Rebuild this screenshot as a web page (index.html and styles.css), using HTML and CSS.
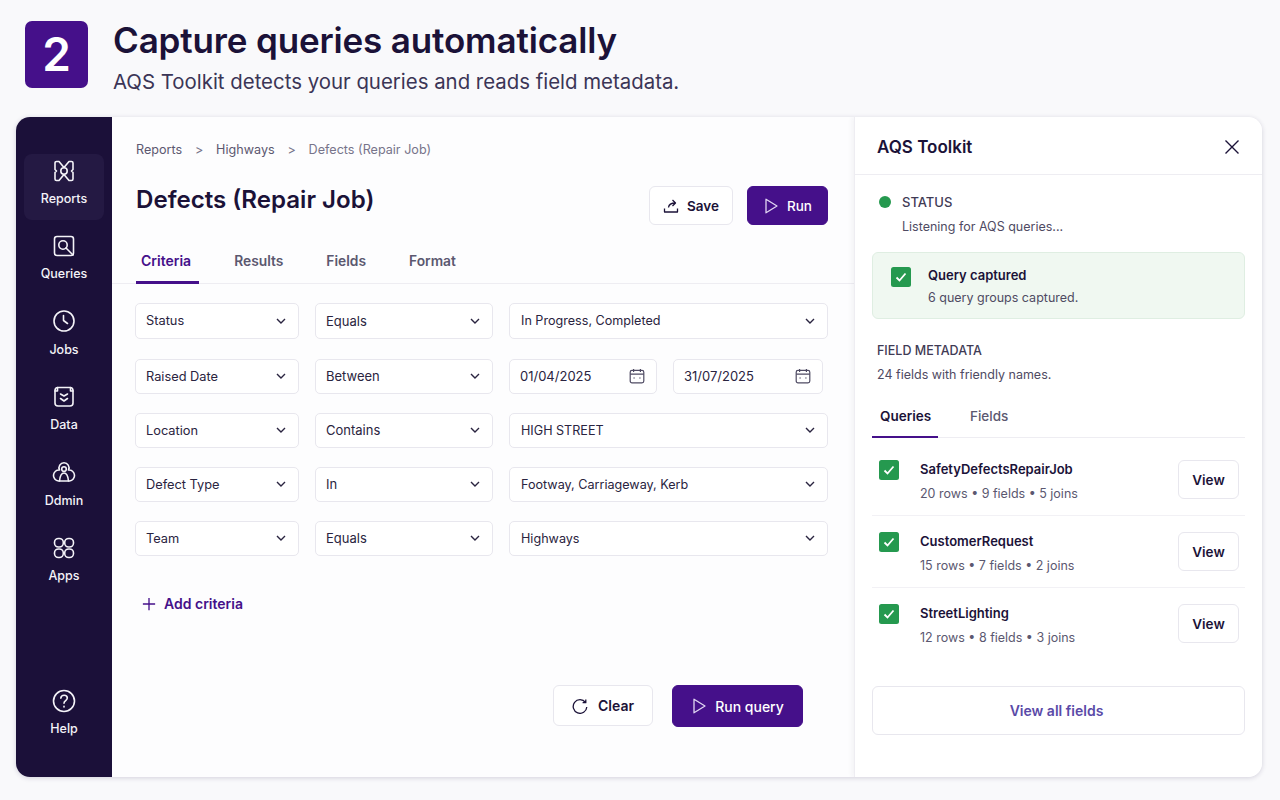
FILE: index.html
```html
<!DOCTYPE html>
<html lang="en">
<head>
    <meta charset="UTF-8">
    <title>Capture queries automatically</title>
    <link rel="stylesheet" href="styles.css">
</head>
<body>
    <svg class="defs" width="0" height="0">
        <symbol id="chev" viewBox="0 0 12 12"><path d="M2 4l4 4 4-4"/></symbol>
        <symbol id="cal" viewBox="0 0 16 16"><rect x="1.2" y="2.4" width="13.6" height="12.4" rx="1.8"/><path d="M1.2 6.2h13.6M4.6 1v3M11.4 1v3M4.4 10h1.4M10.2 10h1.4"/></symbol>
        <symbol id="play" viewBox="0 0 16 16"><path d="M3 1.2L14 8 3 14.8z"/></symbol>
        <symbol id="tick" viewBox="0 0 20 20"><rect width="20" height="20" rx="2.5" class="tick-box"/><path d="M5.5 10.5l3 3 6-7" class="tick-mark"/></symbol>
    </svg>

    <header class="top">
        <div class="badge">2</div>
        <div>
            <h1>Capture queries automatically</h1>
            <p>AQS Toolkit detects your queries and reads field metadata.</p>
        </div>
    </header>

    <div class="app">
        <nav class="side">
            <a class="nav on">
                <svg viewBox="0 0 24 24"><path d="M4.5 2.5H7L12 8.500l5-6h2.500A1.500 1.500 0 0 1 21 4v6.500L19.500 12l1.500 1.500V20a1.500 1.500 0 0 1-1.500 1.500H17l-5-6-5 6H4.500A1.500 1.500 0 0 1 3 20v-6.500L4.500 12 3 10.500V4a1.500 1.500 0 0 1 1.500-1.500z"/><circle cx="12" cy="12" r="3.200"/></svg>
                Reports
            </a>
            <a class="nav">
                <svg viewBox="0 0 24 24"><rect x="2.5" y="2.500" width="19" height="19" rx="2.500"/><circle cx="11" cy="11" r="4.200"/><path d="M14 14l7 7"/></svg>
                Queries
            </a>
            <a class="nav">
                <svg viewBox="0 0 24 24"><circle cx="12" cy="11" r="10"/><path d="M11.500 5.500v5l4 3"/></svg>
                Jobs
            </a>
            <a class="nav">
                <svg viewBox="0 0 24 24"><rect x="3" y="2.500" width="18" height="18.500" rx="3"/><path d="M3 6h2.500V2.500M21 6h-2.500V2.500M8.500 9l3.500 2 3.500-2M8.500 13.500l3.500 2.500 3.500-2.500"/></svg>
                Data
            </a>
            <a class="nav">
                <svg viewBox="0 0 24 24"><path d="M7.500 9A5 5 0 1 1 16.500 9 5.500 5.500 0 0 1 17.500 20h-11A5.500 5.500 0 0 1 7.500 9z"/><circle cx="12" cy="8" r="2.300"/><path d="M7.500 20c.5-5 2-8 4.500-8s4 3 4.500 8"/></svg>
                Ddmin
            </a>
            <a class="nav">
                <svg viewBox="0 0 24 24"><rect x="2.5" y="2.500" width="8.800" height="8.500" rx="4"/><rect x="12.700" y="2.500" width="8.800" height="8.500" rx="4"/><rect x="2.500" y="13" width="8.800" height="8.500" rx="4"/><rect x="12.700" y="13" width="8.800" height="8.500" rx="4"/></svg>
                Apps
            </a>
            <a class="nav help">
                <svg viewBox="0 0 24 24"><circle cx="12" cy="12" r="10.500"/><path d="M8.800 9.200c.2-2 1.600-3 3.300-3 1.800 0 3.200 1.200 3.200 2.900 0 2.500-3.300 2.700-3.300 5.200"/><path d="M12 17.300v.6"/></svg>
                Help
            </a>
        </nav>

        <main class="main">
            <div class="crumbs">
                <span>Reports</span><i>&gt;</i><span>Highways</span><i>&gt;</i><span class="last">Defects (Repair Job)</span>
            </div>
            <div class="title-row">
                <h2>Defects (Repair Job)</h2>
                <div class="actions">
                    <button class="btn">
                        <svg class="ic" viewBox="0 0 16 16"><path d="M1.500 10.500V14h13v-3.500M5.500 9.500c.3-2.800 2.500-4.500 7-4.500M9.500 2l3 3-3 3"/></svg>
                        Save
                    </button>
                    <button class="btn primary">
                        <svg class="ic play"><use href="#play"/></svg>
                        Run
                    </button>
                </div>
            </div>
            <div class="tabs">
                <a class="tab on">Criteria</a>
                <a class="tab">Results</a>
                <a class="tab">Fields</a>
                <a class="tab">Format</a>
            </div>

            <div class="rows">
                <div class="row">
                    <div class="field f1">Status<svg class="chev"><use href="#chev"/></svg></div>
                    <div class="field f2">Equals<svg class="chev"><use href="#chev"/></svg></div>
                    <div class="field f3">In Progress, Completed<svg class="chev"><use href="#chev"/></svg></div>
                </div>
                <div class="row r2">
                    <div class="field f1">Raised Date<svg class="chev"><use href="#chev"/></svg></div>
                    <div class="field f2">Between<svg class="chev"><use href="#chev"/></svg></div>
                    <div class="field date">01/04/2025<svg class="cal"><use href="#cal"/></svg></div>
                    <div class="field date d2">31/07/2025<svg class="cal"><use href="#cal"/></svg></div>
                </div>
                <div class="row">
                    <div class="field f1">Location<svg class="chev"><use href="#chev"/></svg></div>
                    <div class="field f2">Contains<svg class="chev"><use href="#chev"/></svg></div>
                    <div class="field f3">HIGH STREET<svg class="chev"><use href="#chev"/></svg></div>
                </div>
                <div class="row">
                    <div class="field f1">Defect Type<svg class="chev"><use href="#chev"/></svg></div>
                    <div class="field f2">In<svg class="chev"><use href="#chev"/></svg></div>
                    <div class="field f3">Footway, Carriageway, Kerb<svg class="chev"><use href="#chev"/></svg></div>
                </div>
                <div class="row">
                    <div class="field f1">Team<svg class="chev"><use href="#chev"/></svg></div>
                    <div class="field f2">Equals<svg class="chev"><use href="#chev"/></svg></div>
                    <div class="field f3">Highways<svg class="chev"><use href="#chev"/></svg></div>
                </div>
            </div>

            <a class="add">
                <svg viewBox="0 0 16 16"><path d="M8 1v14M1 8h14"/></svg>
                Add criteria
            </a>

            <div class="foot">
                <button class="btn big">
                    <svg class="ic" viewBox="0 0 16 16"><path d="M13.500 4.500A6.800 6.800 0 1 0 14.800 9M13.800 1.500v3.200h-3.200"/></svg>
                    Clear
                </button>
                <button class="btn big primary">
                    <svg class="ic play"><use href="#play"/></svg>
                    Run query
                </button>
            </div>
        </main>

        <aside class="panel">
            <div class="panel-head">
                <h3>AQS Toolkit</h3>
                <svg class="close" viewBox="0 0 16 16"><path d="M1.500 1.500l13 13M14.500 1.500l-13 13"/></svg>
            </div>
            <div class="panel-body">
                <div class="status">
                    <div class="status-top"><b class="dot"></b>STATUS</div>
                    <p>Listening for AQS queries...</p>
                </div>
                <div class="captured">
                    <svg class="tick"><use href="#tick"/></svg>
                    <div>
                        <strong>Query captured</strong>
                        <p>6 query groups captured.</p>
                    </div>
                </div>
                <div class="meta">
                    <h4>FIELD METADATA</h4>
                    <p>24 fields with friendly names.</p>
                </div>
                <div class="subtabs">
                    <a class="subtab on">Queries</a>
                    <a class="subtab">Fields</a>
                </div>
                <div class="query first-query">
                    <svg class="tick"><use href="#tick"/></svg>
                    <div class="query-info">
                        <strong>SafetyDefectsRepairJob</strong>
                        <p>20 rows • 9 fields • 5 joins</p>
                    </div>
                    <button class="view">View</button>
                </div>
                <div class="query">
                    <svg class="tick"><use href="#tick"/></svg>
                    <div class="query-info">
                        <strong>CustomerRequest</strong>
                        <p>15 rows • 7 fields • 2 joins</p>
                    </div>
                    <button class="view">View</button>
                </div>
                <div class="query last-query">
                    <svg class="tick"><use href="#tick"/></svg>
                    <div class="query-info">
                        <strong>StreetLighting</strong>
                        <p>12 rows • 8 fields • 3 joins</p>
                    </div>
                    <button class="view">View</button>
                </div>
                <button class="view-all">View all fields</button>
            </div>
        </aside>
    </div>
</body>
</html>
```

FILE: styles.css
```css
*{
    margin: 0;
    padding: 0;
    box-sizing: border-box;
}
body{
    width: 1280px;
    height: 800px;
    overflow: hidden;
    background: #f9f9fb;
    color: #1b1238;
    font-family: Inter, "Liberation Sans", sans-serif;
}
.defs{
    position: absolute;
}
svg{
    fill: none;
    stroke: currentColor;
}
button{
    font-family: inherit;
    cursor: pointer;
}

/* page header */
.top{
    display: flex;
    height: 117px;
    padding: 21px 0 0 25px;
    gap: 25px;
}
.badge{
    width: 63px;
    height: 67px;
    border-radius: 7px;
    background: #45108a;
    color: #fff;
    font-size: 46px;
    font-weight: 600;
    line-height: 67px;
    text-align: center;
}
.top h1{
    font-size: 35px;
    font-weight: 600;
    line-height: 38px;
    letter-spacing: -0.15px;
}
.top p{
    margin-top: 10px;
    font-size: 20.4px;
    line-height: 26px;
    color: #3b3556;
}

/* app frame */
.app{
    display: flex;
    width: 1246px;
    height: 660px;
    margin-left: 16px;
    border-radius: 14px;
    background: #fdfdfe;
    box-shadow: 0 1px 5px rgba(40, 30, 80, 0.18);
    overflow: hidden;
}
.side{
    display: flex;
    flex-direction: column;
    flex: none;
    width: 96px;
    padding: 37px 8px 27px;
    gap: 9.4px;
    background: #1b1039;
    color: #f4f3f8;
}
.nav{
    display: flex;
    flex-direction: column;
    align-items: center;
    height: 66px;
    padding-top: 5px;
    border-radius: 8px;
    font-size: 12.5px;
    font-weight: 500;
    line-height: 16px;
}
.nav svg{
    width: 24px;
    height: 24px;
    margin-bottom: 8px;
    stroke-width: 1.6;
    stroke-linecap: round;
    stroke-linejoin: round;
}
.nav.on{
    background: #241943;
}
.help{
    margin-top: auto;
}

/* main column */
.main{
    display: flex;
    flex-direction: column;
    flex: none;
    width: 742px;
    padding: 24px 0 0;
}
.crumbs{
    display: flex;
    align-items: center;
    height: 17px;
    padding-left: 24px;
    font-size: 12.6px;
    color: #5c5870;
}
.crumbs i{
    width: 34px;
    font-style: normal;
    text-align: center;
    color: #77748a;
}
.crumbs .last{
    color: #77748a;
}
.title-row{
    display: flex;
    justify-content: space-between;
    padding: 23px 26px 0 24px;
    height: 86px;
}
.title-row h2{
    margin-top: 2px;
    font-size: 24.1px;
    font-weight: 600;
    line-height: 34px;
}
.actions{
    display: flex;
    gap: 14px;
    margin-top: 5px;
    height: 39px;
}
.btn{
    display: flex;
    align-items: center;
    justify-content: center;
    gap: 8px;
    width: 84px;
    border: 1px solid #e8e7ee;
    border-radius: 6px;
    background: #fff;
    color: #1b1238;
    font-size: 13.5px;
    font-weight: 600;
}
.btn.primary{
    width: 81px;
    border-color: #45108a;
    background: #45108a;
    color: #fff;
    font-weight: 500;
}
.ic{
    width: 16px;
    height: 16px;
    stroke-width: 1.3;
    stroke-linejoin: round;
}
.play{
    color: #e0d6f2;
}
.tabs{
    display: flex;
    height: 40px;
    padding-left: 24px;
    border-bottom: 1px solid #eeedf2;
}
.tab{
    padding: 0 6px;
    margin-right: 31px;
    font-size: 13.8px;
    font-weight: 600;
    line-height: 34px;
    color: #5b5870;
}
.tab.on{
    height: 40px;
    padding: 0 8px 0 5px;
    margin-right: 29px;
    border-bottom: 3px solid #45108a;
    color: #45108a;
    font-size: 14px;
}

/* criteria rows */
.rows{
    display: flex;
    flex-direction: column;
    gap: 18.5px;
    padding: 19px 0 0 23px;
}
.row{
    display: flex;
    gap: 16px;
}
.r2{
    margin-top: 1.5px;
}
.field{
    display: flex;
    align-items: center;
    justify-content: space-between;
    height: 35.5px;
    padding: 0 11px 0 10px;
    border: 1px solid #e8e7ee;
    border-radius: 5px;
    background: #fff;
    font-size: 13px;
    color: #2a2440;
}
.f1{
    width: 164px;
    font-size: 12.8px;
}
.f2{
    width: 178px;
}
.f3{
    width: 319px;
    padding-left: 11px;
    font-size: 12.6px;
}
.date{
    width: 148px;
}
.d2{
    width: 150px;
}
.chev{
    width: 12px;
    height: 12px;
    stroke-width: 1.4;
}
.cal{
    width: 16px;
    height: 16px;
    stroke-width: 1.2;
    color: #4f4b63;
}
.add{
    display: flex;
    align-items: center;
    gap: 8px;
    margin: 39px 0 0 30px;
    font-size: 14px;
    font-weight: 600;
    color: #45108a;
}
.add svg{
    width: 14px;
    height: 14px;
    stroke-width: 1.5;
}
.foot{
    display: flex;
    gap: 19px;
    margin: 73px 0 0 441px;
}
.btn.big{
    gap: 10px;
    width: 100px;
    height: 41px;
    font-size: 14px;
}
.btn.big.primary{
    gap: 8px;
    width: 131px;
    height: 42px;
}

/* toolkit panel */
.panel{
    flex: none;
    width: 408px;
    border-left: 1px solid #eeedf2;
    background: #fff;
    box-shadow: -2px 0 5px rgba(40, 30, 80, 0.05);
}
.panel-head{
    display: flex;
    align-items: center;
    justify-content: space-between;
    height: 58px;
    padding: 2px 22px 0;
    border-bottom: 1px solid #eeedf2;
}
.panel-head h3{
    font-size: 17px;
    font-weight: 600;
}
.close{
    width: 16px;
    height: 16px;
    stroke-width: 1.4;
}
.panel-body{
    padding: 0 17px;
}
.status{
    padding: 18px 0 0 7px;
}
.status-top{
    display: flex;
    align-items: center;
    gap: 11px;
    font-size: 13px;
    font-weight: 500;
    line-height: 18px;
    color: #3f3b55;
}
.dot{
    width: 12px;
    height: 12px;
    border-radius: 50%;
    background: #25994f;
}
.status p{
    margin: 7px 0 0 23px;
    font-size: 12.5px;
    line-height: 18px;
    color: #4f4b63;
}
.captured{
    display: flex;
    gap: 17px;
    height: 67px;
    margin-top: 16px;
    padding: 14px 18px;
    border: 1px solid #dfeee2;
    border-radius: 6px;
    background: #f0f8f1;
}
.captured strong{
    display: block;
    font-size: 13px;
    font-weight: 600;
    line-height: 16px;
}
.captured p{
    margin-top: 7px;
    font-size: 12.5px;
    line-height: 16px;
    color: #4f4b63;
}
.tick{
    flex: none;
    width: 20px;
    height: 20px;
}
.tick-box{
    fill: #25994f;
    stroke: none;
}
.tick-mark{
    stroke: #fff;
    stroke-width: 1.8;
}
.meta{
    padding: 23px 0 0 5px;
}
.meta h4{
    font-size: 12.5px;
    font-weight: 500;
    line-height: 18px;
    color: #3f3b55;
}
.meta p{
    margin-top: 6px;
    font-size: 12.5px;
    line-height: 17px;
    color: #4f4b63;
}
.subtabs{
    display: flex;
    height: 42px;
    margin-top: 13px;
    border-bottom: 1px solid #eeedf2;
}
.subtab{
    padding: 0 8px;
    margin-right: 24px;
    font-size: 13.5px;
    font-weight: 500;
    line-height: 40px;
    color: #5b5870;
}
.subtab.on{
    width: 66px;
    height: 42px;
    border-bottom: 2px solid #45108a;
    color: #1b1238;
    font-weight: 600;
}
.query{
    display: flex;
    align-items: flex-start;
    height: 72px;
    padding: 16px 6px 0 7px;
    border-bottom: 1px solid #f2f1f5;
}
.first-query{
    height: 78px;
    padding-top: 22px;
}
.last-query{
    border-bottom: none;
}
.query-info{
    flex: 1;
    margin-left: 21px;
}
.query strong{
    display: block;
    font-size: 13px;
    font-weight: 600;
    line-height: 18px;
}
.query p{
    margin-top: 7px;
    font-size: 12.5px;
    line-height: 17px;
    color: #5b5870;
}
.view{
    width: 61px;
    height: 39px;
    border: 1px solid #e8e7ee;
    border-radius: 6px;
    background: #fff;
    color: #1b1238;
    font-size: 13.5px;
    font-weight: 600;
}
.view-all{
    display: block;
    width: 100%;
    height: 49px;
    margin-top: 26px;
    padding-right: 4px;
    border: 1px solid #e8e7ee;
    border-radius: 6px;
    background: #fff;
    color: #5a4aa8;
    font-size: 14px;
    font-weight: 600;
}
```
